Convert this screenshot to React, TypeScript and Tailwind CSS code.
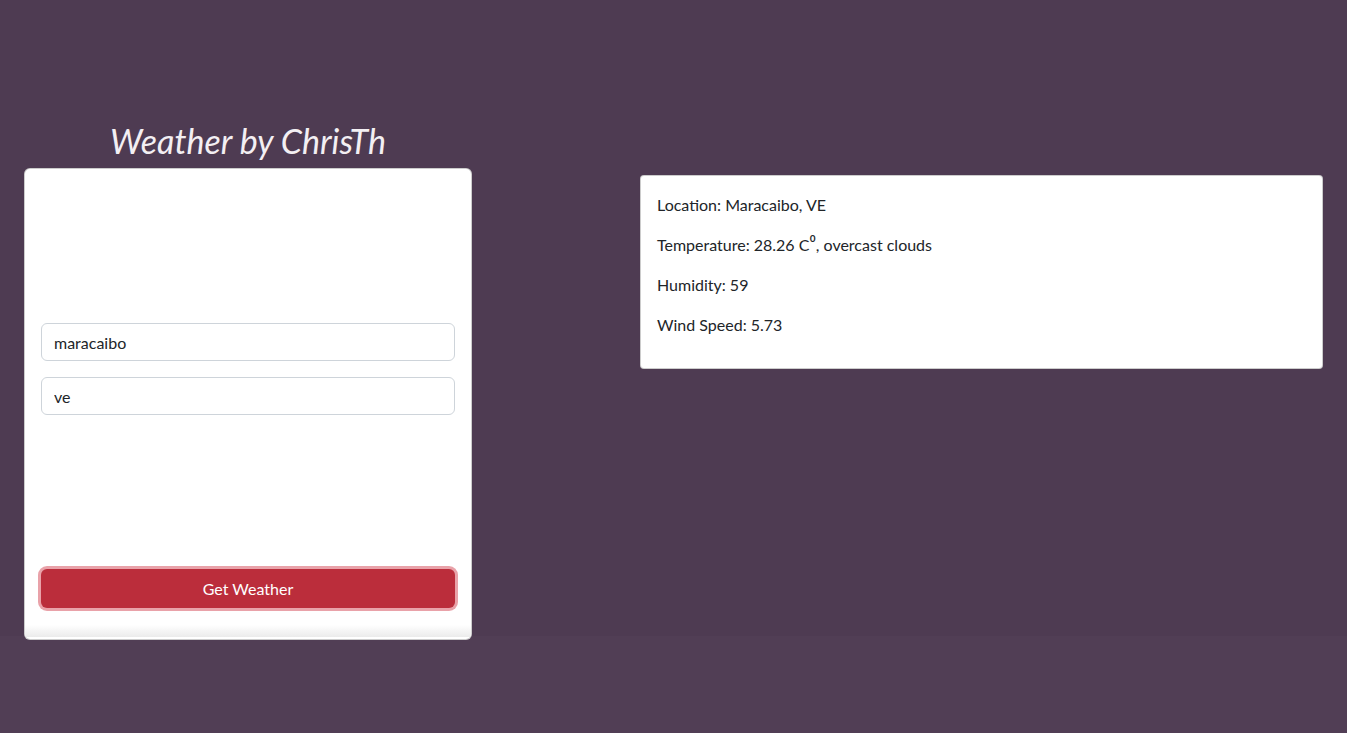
export default function App() {
  const lines = [
    "Location: Maracaibo, VE",
    "Humidity: 59",
    "Wind Speed: 5.73",
  ];
  return (
    <div className="min-h-screen bg-[#513e55] font-['Lato','Noto_Sans',sans-serif] text-[#212529]">
      <div className="h-[636px] bg-[#4e3b52] px-6 flex items-start">
        <div className="w-[448px] flex flex-col pt-[122px]">
          <h1 className="text-center text-[34px] leading-[38px] italic font-normal text-[#f3eff3] mb-2">
            Weather by ChrisTh
          </h1>
          <div className="relative h-[472px] bg-white border border-black/20 rounded-md flex flex-col px-4 pt-[154px] overflow-hidden">
            <input
              defaultValue="maracaibo"
              className="h-[38px] w-full border border-[#ced4da] rounded-md px-3 text-base outline-none"
            />
            <input
              defaultValue="ve"
              className="h-[38px] w-full border border-[#ced4da] rounded-md px-3 text-base outline-none mt-4"
            />
            <button className="mt-[154px] h-[39px] w-full rounded-md bg-[#bb2d3b] text-white text-base ring-[3px] ring-[#e9a2a9]">
              Get Weather
            </button>
            <div className="absolute left-0 right-0 bottom-[2px] h-[12px] bg-gradient-to-b from-white to-[#ebebeb]" />
          </div>
        </div>
        <div className="ml-auto w-[683px] mt-[175px] bg-white border border-black/20 rounded px-4 pt-[17px] pb-[15px]">
          <p className="text-base leading-6 mb-4">{lines[0]}</p>
          <p className="text-base leading-6 mb-4">
            Temperature: 28.26 C<span className="text-[19px] leading-[0]">{"\u2070"}</span>, overcast clouds
          </p>
          <p className="text-base leading-6 mb-4">{lines[1]}</p>
          <p className="text-base leading-6 mb-4">{lines[2]}</p>
        </div>
      </div>
    </div>
  );
}
